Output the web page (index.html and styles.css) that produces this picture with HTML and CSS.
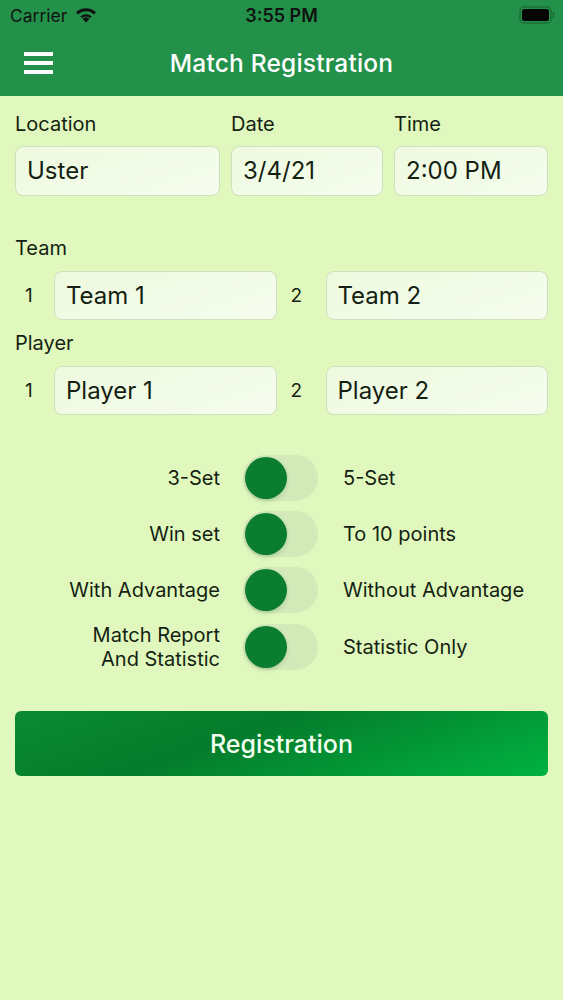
FILE: index.html
```html
<!DOCTYPE html>
<html lang="en">
<head>
  <meta charset="UTF-8">
  <title>Match Registration</title>
  <meta name="viewport" content="width=device-width, initial-scale=1">
  <link rel="stylesheet" href="styles.css">
</head>
<body>
  <header class="top">
    <div class="status">
      <div class="carrier">
        Carrier
        <svg class="wifi" width="22" height="16" viewBox="0 0 22 16">
          <path d="M11 15.5 L7.6 11.9 A5 5 0 0 1 14.4 11.9 Z" fill="#111"/>
          <path d="M5.4 9.6 A8 8 0 0 1 16.6 9.6 L15.2 11.1 A6 6 0 0 0 6.8 11.1 Z" fill="#111"/>
          <path d="M1 5.4 A14 14 0 0 1 21 5.4 L18.9 7.6 A11 11 0 0 0 3.1 7.6 Z" fill="#111"/>
        </svg>
      </div>
      <div class="clock">3:55 PM</div>
      <svg class="battery" width="36" height="18" viewBox="0 0 36 18">
        <rect x="1" y="1" width="31" height="16" rx="4" fill="none" stroke="#1c6e36" stroke-width="1.5"/>
        <rect x="3" y="3" width="27" height="12" rx="2.5" fill="#050505"/>
        <rect x="33.5" y="6" width="2" height="6" rx="1" fill="#1c6e36"/>
      </svg>
    </div>
    <nav class="navbar">
      <span class="menu"><i></i><i></i><i></i></span>
      <h1>Match Registration</h1>
    </nav>
  </header>

  <main class="form">
    <div class="where">
      <label>Location <div class="field">Uster</div></label>
      <label>Date <div class="field">3/4/21</div></label>
      <label>Time <div class="field">2:00 PM</div></label>
    </div>

    <div class="group first">
      <div class="caption">Team</div>
      <div class="pair">
        <span class="num">1</span><div class="field">Team 1</div>
        <span class="num">2</span><div class="field">Team 2</div>
      </div>
    </div>
    <div class="group">
      <div class="caption">Player</div>
      <div class="pair">
        <span class="num">1</span><div class="field">Player 1</div>
        <span class="num">2</span><div class="field">Player 2</div>
      </div>
    </div>

    <div class="options">
      <div class="opt"><span class="left">3-Set</span><span class="switch"><b></b></span><span>5-Set</span></div>
      <div class="opt"><span class="left">Win set</span><span class="switch"><b></b></span><span>To 10 points</span></div>
      <div class="opt"><span class="left">With Advantage</span><span class="switch"><b></b></span><span>Without Advantage</span></div>
      <div class="opt"><span class="left">Match Report<br>And Statistic</span><span class="switch"><b></b></span><span>Statistic Only</span></div>
    </div>

    <button class="register">Registration</button>
  </main>
</body>
</html>
```

FILE: styles.css
```css
:root {
  --green: #23914a;
  --bg: #e0f8bd;
  --field: #f1fbe7;
  --line: #cfe0bf;
  --ink: #151f12;
}
body {
  margin: 0;
  background: var(--bg);
  font-family: Inter, 'Noto Sans', Arial, sans-serif;
  color: var(--ink);
}
.top { background: var(--green); }
.status {
  height: 30px;
  display: flex;
  align-items: center;
  justify-content: space-between;
  padding: 0 10px 0 10px;
  position: relative;
  font-size: 17.5px;
  color: #111;
}
.carrier { display: flex; align-items: center; gap: 8px; }
.wifi { margin-top: -1px; }
.clock {
  position: absolute;
  left: 0; right: 0;
  text-align: center;
  font-size: 18px;
  font-weight: 600;
  pointer-events: none;
}
.battery { margin-right: -2px; }
.navbar {
  height: 66px;
  display: flex;
  align-items: center;
  position: relative;
  padding-left: 24px;
}
.menu { display: flex; flex-direction: column; gap: 5px; width: 29px; }
.menu i { display: block; height: 4px; background: #fff; }
.navbar h1 {
  position: absolute;
  left: 0; right: 0;
  margin: 0;
  text-align: center;
  color: #fff;
  font-size: 24.5px;
  font-weight: 500;
  letter-spacing: .2px;
}
.form { padding: 16px 15px 0 15px; }
label, .caption, .opt { font-size: 20px; line-height: 24px; }
.where {
  display: grid;
  grid-template-columns: 205px 152px 1fr;
  gap: 11px;
}
.where label { display: flex; flex-direction: column; gap: 10px; }
.field {
  height: 48px;
  border: 1px solid var(--line);
  border-radius: 8px;
  background: linear-gradient(160deg, #eefadf, #f5fcee);
  font-size: 24px;
  line-height: 48px;
  padding-left: 11px;
  box-sizing: content-box;
}
.group { margin-top: 11px; }
.group.first { margin-top: 40px; }
.caption { margin-bottom: 11px; }
.pair {
  display: grid;
  grid-template-columns: 39px 1fr 49px 1fr;
  align-items: center;
}
.pair .field { height: 47px; line-height: 47px; }
.num { font-size: 19px; padding-left: 10px; }
.pair .num:nth-of-type(2) { padding-left: 14px; }
.options {
  margin-top: 40px;
  display: flex;
  flex-direction: column;
  gap: 10px;
}
.opt {
  display: grid;
  grid-template-columns: 205px 75px 1fr;
  column-gap: 23px;
  align-items: center;
}
.opt > span:last-child { padding-left: 2px; }
.left { text-align: right; }
.switch {
  height: 46px;
  border-radius: 23px;
  background: #d2e9b8;
  padding: 2px;
  box-sizing: border-box;
  display: flex;
  align-items: center;
}
.switch b {
  width: 42px;
  height: 42px;
  border-radius: 50%;
  background: #0a7d30;
  box-shadow: 0 2px 4px rgba(0,60,0,.18);
}
.register {
  display: block;
  width: 100%;
  height: 65px;
  margin-top: 40px;
  border: none;
  border-radius: 6px;
  background: linear-gradient(160deg, #0b8a32 0%, #057c2b 40%, #00b241 100%);
  color: #f2fff0;
  font-family: inherit;
  font-size: 25px;
  font-weight: 500;
}
```
